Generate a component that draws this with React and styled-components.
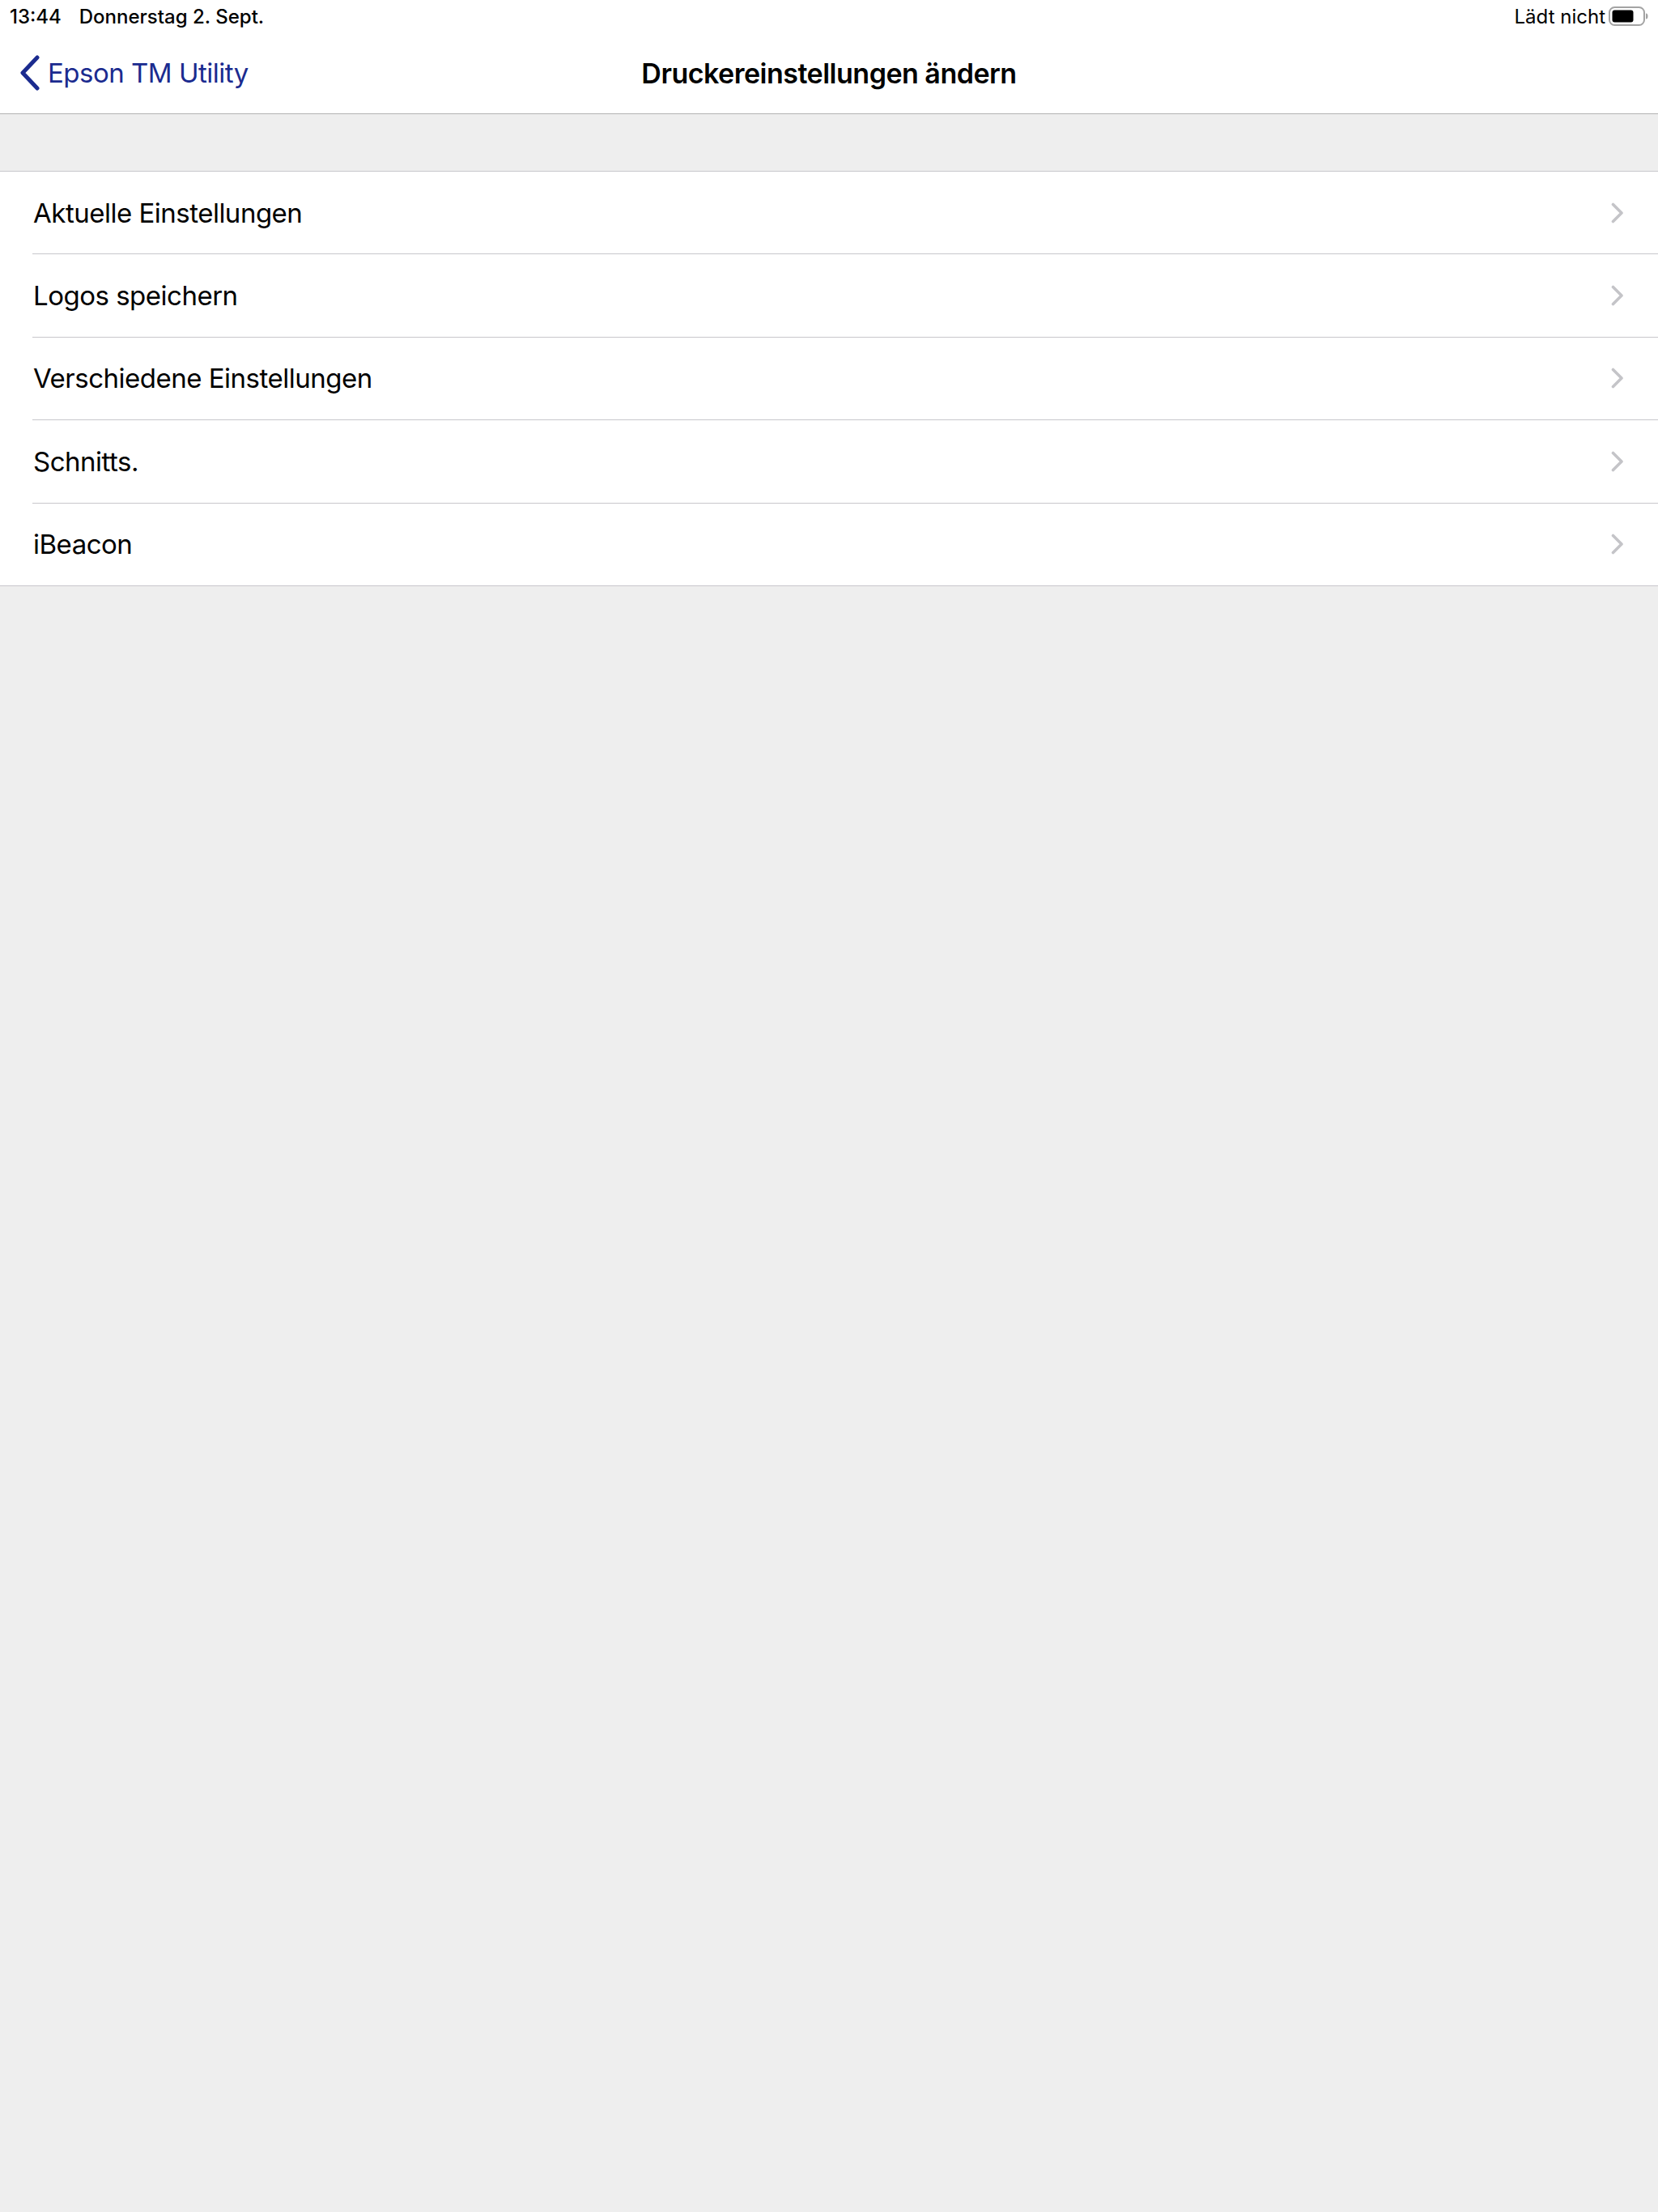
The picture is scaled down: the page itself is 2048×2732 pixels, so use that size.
import React from "react";
import styled, { createGlobalStyle } from "styled-components";

const GlobalStyle = createGlobalStyle`
	html, body {
		margin: 0;
		padding: 0;
		background: #eeeeee;
	}
	body {
		font-family: Inter, "Noto Sans", "Liberation Sans", sans-serif;
		color: #000;
		-webkit-font-smoothing: antialiased;
	}
`;

const items = [
	"Aktuelle Einstellungen",
	"Logos speichern",
	"Verschiedene Einstellungen",
	"Schnitts.",
	"iBeacon",
];

const BatteryIcon = () => (
	<svg width="49" height="24" viewBox="0 0 49 24">
		<rect x="1" y="1" width="43" height="22" rx="6.5" fill="none" stroke="#a3a3a3" strokeWidth="2" />
		<rect x="4.5" y="4.5" width="26" height="15" rx="3" fill="#000" />
		<path d="M46 8.5 a2.5 3.5 0 0 1 0 7 z" fill="#a3a3a3" />
	</svg>
);

const BackChevron = () => (
	<svg width="26" height="44" viewBox="0 0 26 44">
		<path d="M22 3 L4 22 L22 41" fill="none" stroke="#1b2b8f" strokeWidth="5" strokeLinecap="round" strokeLinejoin="round" />
	</svg>
);

const RowChevron = () => (
	<svg width="16" height="26" viewBox="0 0 16 26">
		<path d="M2.5 2.5 L13 13 L2.5 23.5" fill="none" stroke="#c4c4c8" strokeWidth="3.6" strokeLinecap="round" strokeLinejoin="round" />
	</svg>
);

const App = () => {
	return (
		<Page>
			<GlobalStyle />
			<Header>
				<StatusBar>
					<StatusLeft>
						<span>13:44</span>
						<span>Donnerstag 2. Sept.</span>
					</StatusLeft>
					<StatusRight>
						<span>Lädt nicht</span>
						<BatteryIcon />
					</StatusRight>
				</StatusBar>
				<NavBar>
					<BackButton>
						<BackChevron />
						<span>Epson TM Utility</span>
					</BackButton>
					<Title>Druckereinstellungen ändern</Title>
					<div />
				</NavBar>
			</Header>
			<Spacer />
			<Group>
				{items.map((item, i) => (
					<Row key={i}>
						<RowInner last={i === items.length - 1}>
							<RowLabel>{item}</RowLabel>
							<RowChevron />
						</RowInner>
					</Row>
				))}
			</Group>
		</Page>
	);
};

const Page = styled.div`
	min-height: 2732px;
	background: #eeeeee;
`;

const Header = styled.header`
	background: #ffffff;
	border-bottom: 1px solid #b2b2b2;
`;

const StatusBar = styled.div`
	height: 40px;
	display: flex;
	align-items: center;
	justify-content: space-between;
	padding: 0 12px 0 12px;
	font-size: 24px;
	font-weight: 500;
`;

const StatusLeft = styled.div`
	display: flex;
	gap: 22px;
`;

const StatusRight = styled.div`
	display: flex;
	align-items: center;
	gap: 4px;
	font-weight: 400;
`;

const NavBar = styled.div`
	height: 100px;
	display: grid;
	grid-template-columns: 1fr auto 1fr;
	align-items: center;
	padding: 0 24px;
`;

const BackButton = styled.div`
	display: flex;
	align-items: center;
	gap: 9px;
	color: #1b2b8f;
	font-size: 33px;
	font-weight: 400;
	letter-spacing: -0.5px;
`;

const Title = styled.div`
	font-size: 34px;
	font-weight: 600;
	letter-spacing: -0.5px;
	text-align: center;
`;

const Spacer = styled.div`
	height: 70px;
`;

const Group = styled.div`
	background: #ffffff;
	border-top: 1px solid #c8c7cc;
	border-bottom: 1px solid #c8c7cc;
`;

const Row = styled.div`
	padding-left: 40px;
`;

const RowInner = styled.div`
	height: 101.4px;
	display: flex;
	align-items: center;
	justify-content: space-between;
	padding-right: 42px;
	border-bottom: ${(p) => (p.last ? "none" : "1px solid #c8c7cc")};
	box-sizing: content-box;
`;

const RowLabel = styled.span`
	font-size: 33px;
	font-weight: 400;
	padding-left: 1px;
	letter-spacing: -0.5px;
`;

export default App;
